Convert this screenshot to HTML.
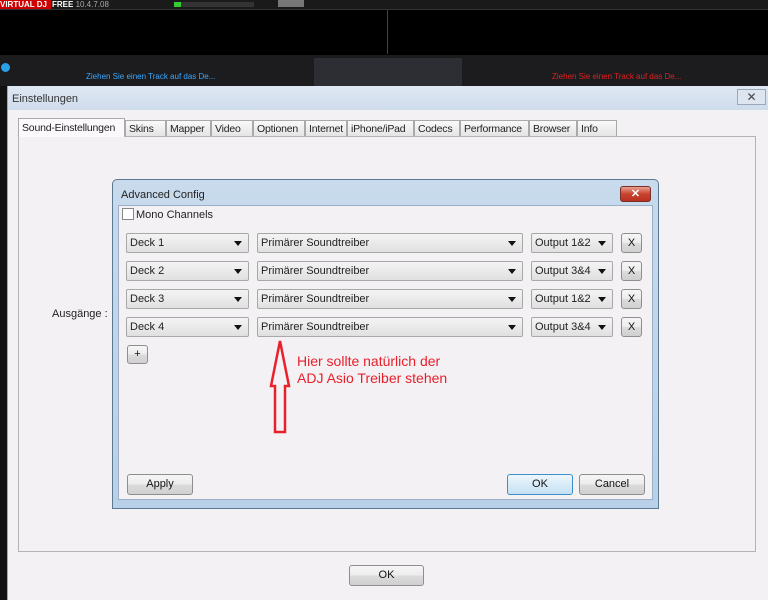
<!DOCTYPE html>
<html><head><meta charset="utf-8"><style>
*{box-sizing:border-box;margin:0;padding:0}
body{width:768px;height:600px;overflow:hidden;background:#000;font-family:"Liberation Sans",sans-serif;position:relative}
.a{position:absolute}
.sel{position:absolute;height:20px;border:1px solid #a8a8a8;border-radius:2px;background:linear-gradient(#f4f4f4,#e0e0e0);font-size:11px;color:#222;padding:3px 3px;white-space:nowrap}
.sel:after{content:"";position:absolute;right:6px;top:7px;border-left:4px solid transparent;border-right:4px solid transparent;border-top:5px solid #111}
.btn{position:absolute;border:1px solid #8e8e8e;border-radius:3px;background:linear-gradient(#f6f6f6 0,#ececec 50%,#dcdcdc 51%,#d0d0d0);font-size:11px;color:#111;text-align:center}
.tab{position:absolute;top:120px;height:16px;border:1px solid #aaa;border-bottom:none;background:linear-gradient(#fafafa,#e4e4e4);font-size:10.5px;color:#222;padding:2px 0 0 3px;white-space:nowrap;overflow:hidden;letter-spacing:-0.2px}
</style></head><body>
<div class="a" style="left:0;top:0;width:768px;height:10px;background:#1a1a1a;border-bottom:1px solid #333"></div>
<div class="a" style="left:0;top:0;width:51px;height:9px;background:#c00;color:#fff;font-size:8px;font-weight:bold;line-height:9px">VIRTUAL DJ</div>
<div class="a" style="left:52px;top:0;font-size:8px;color:#fff;font-weight:bold;line-height:9px">FREE <span style="color:#aaa;font-weight:normal">10.4.7.08</span></div>
<div class="a" style="left:174px;top:2px;width:80px;height:5px;background:#333"></div>
<div class="a" style="left:174px;top:2px;width:7px;height:5px;background:#3c3"></div>
<div class="a" style="left:278px;top:0;width:26px;height:7px;background:#777"></div>
<div class="a" style="left:0;top:10px;width:768px;height:44px;background:#000"></div>
<div class="a" style="left:387px;top:10px;width:1px;height:44px;background:#444"></div>
<div class="a" style="left:0;top:55px;width:768px;height:31px;background:#1c1c1e"></div>
<div class="a" style="left:314px;top:58px;width:148px;height:28px;background:#2c2e34"></div>
<div class="a" style="left:1px;top:63px;width:9px;height:9px;border-radius:50%;background:#2aa0e8"></div>
<div class="a" style="left:86px;top:72px;font-size:8px;color:#3aa8ff">Ziehen Sie einen Track auf das De...</div>
<div class="a" style="left:552px;top:72px;font-size:8px;color:#e02020">Ziehen Sie einen Track auf das De...</div>
<div class="a" style="left:0;top:86px;width:7px;height:514px;background:#111"></div>
<div class="a" style="left:7px;top:86px;width:761px;height:514px;background:#f4f1f5;border-left:1px solid #9aaabb"></div>
<div class="a" style="left:8px;top:86px;width:760px;height:24px;background:linear-gradient(#dfe8f3,#cfdcec)"></div>
<div class="a" style="left:12px;top:93px;font-size:11px;color:#333">Einstellungen</div>
<div class="a" style="left:737px;top:89px;width:29px;height:16px;border:1px solid #9aa8b8;background:#dde6f0;font-size:12px;text-align:center;line-height:14px;color:#444">✕</div>
<div class="a" style="left:18px;top:136px;width:738px;height:416px;background:#f4f1f5;border:1px solid #b4b4b4"></div>
<div class="tab" style="left:18px;top:118px;height:19px;background:#fbf9fb;width:107px;padding-top:3px">Sound-Einstellungen</div>
<div class="tab" style="left:125px;width:41px">Skins</div>
<div class="tab" style="left:166px;width:45px">Mapper</div>
<div class="tab" style="left:211px;width:42px">Video</div>
<div class="tab" style="left:253px;width:52px">Optionen</div>
<div class="tab" style="left:305px;width:42px">Internet</div>
<div class="tab" style="left:347px;width:67px">iPhone/iPad</div>
<div class="tab" style="left:414px;width:46px">Codecs</div>
<div class="tab" style="left:460px;width:69px">Performance</div>
<div class="tab" style="left:529px;width:48px">Browser</div>
<div class="tab" style="left:577px;width:40px">Info</div>
<div class="a" style="left:52px;top:308px;font-size:11px;color:#222">Ausgänge :</div>
<div class="btn" style="left:349px;top:565px;width:75px;height:21px;line-height:19px">OK</div>
<div class="a" style="left:112px;top:179px;width:547px;height:330px;border:1px solid #5b7a92;border-radius:5px 5px 0 0;background:linear-gradient(#c8daec,#b8d0e8)"></div>
<div class="a" style="left:121px;top:189px;font-size:11px;color:#222">Advanced Config</div>
<div class="a" style="left:620px;top:186px;width:31px;height:16px;border:1px solid #7a3028;border-radius:3px;background:linear-gradient(#e8a090,#c8432f 50%,#b83020);color:#fff;font-size:11px;text-align:center;line-height:14px;font-weight:bold">✕</div>
<div class="a" style="left:118px;top:205px;width:535px;height:295px;background:#f4f1f5;border:1px solid #9bb0c6"></div>
<div class="a" style="left:122px;top:208px;width:12px;height:12px;border:1px solid #888;background:#fff"></div>
<div class="a" style="left:136px;top:209px;font-size:11px;color:#222">Mono Channels</div>
<div class="sel" style="left:126px;top:233px;width:123px">Deck 1</div>
<div class="sel" style="left:257px;top:233px;width:266px">Primärer Soundtreiber</div>
<div class="sel" style="left:531px;top:233px;width:82px">Output 1&amp;2</div>
<div class="btn" style="left:621px;top:233px;width:21px;height:20px;line-height:18px">X</div>
<div class="sel" style="left:126px;top:261px;width:123px">Deck 2</div>
<div class="sel" style="left:257px;top:261px;width:266px">Primärer Soundtreiber</div>
<div class="sel" style="left:531px;top:261px;width:82px">Output 3&amp;4</div>
<div class="btn" style="left:621px;top:261px;width:21px;height:20px;line-height:18px">X</div>
<div class="sel" style="left:126px;top:289px;width:123px">Deck 3</div>
<div class="sel" style="left:257px;top:289px;width:266px">Primärer Soundtreiber</div>
<div class="sel" style="left:531px;top:289px;width:82px">Output 1&amp;2</div>
<div class="btn" style="left:621px;top:289px;width:21px;height:20px;line-height:18px">X</div>
<div class="sel" style="left:126px;top:317px;width:123px">Deck 4</div>
<div class="sel" style="left:257px;top:317px;width:266px">Primärer Soundtreiber</div>
<div class="sel" style="left:531px;top:317px;width:82px">Output 3&amp;4</div>
<div class="btn" style="left:621px;top:317px;width:21px;height:20px;line-height:18px">X</div>
<div class="btn" style="left:127px;top:345px;width:21px;height:19px;line-height:17px">+</div>
<svg class="a" style="left:0;top:0" width="768" height="600"><path d="M280 341 L289 386 L285 386 L285 432 L275 432 L275 386 L271 386 Z" fill="none" stroke="#e8202a" stroke-width="2.5"/></svg>
<div class="a" style="left:297px;top:353px;font-size:14px;line-height:17px;color:#e8202a">Hier sollte natürlich der<br>ADJ Asio Treiber stehen</div>
<div class="btn" style="left:127px;top:474px;width:66px;height:21px;line-height:19px">Apply</div>
<div class="btn" style="left:507px;top:474px;width:66px;height:21px;line-height:19px;border-color:#3c8fc8;background:linear-gradient(#eef6fc,#d8ecf8 50%,#c4e0f4)">OK</div>
<div class="btn" style="left:579px;top:474px;width:66px;height:21px;line-height:19px">Cancel</div>
</body></html>
